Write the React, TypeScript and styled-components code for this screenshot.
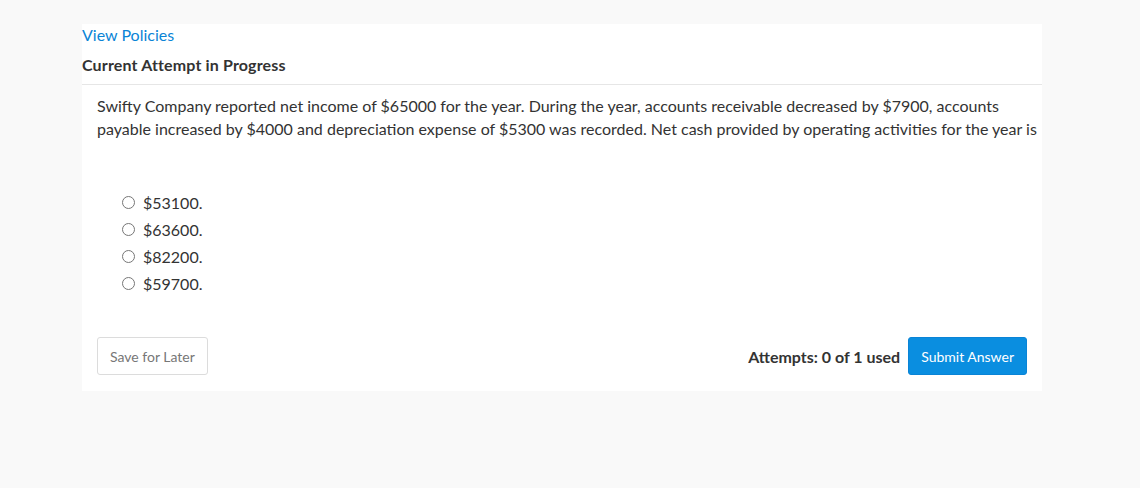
import React from 'react';
import styled, { createGlobalStyle } from 'styled-components';

const GlobalStyle = createGlobalStyle`
    html, body {
        margin: 0;
        padding: 0;
        background: #f9f9f9;
        font-family: Lato, "Open Sans", sans-serif;
        color: #333333;
    }
`;

const Page = styled.div`
    width: 1140px;
    height: 488px;
    padding-top: 24px;
    box-sizing: border-box;
`;

const Card = styled.main`
    width: 960px;
    margin-left: 82px;
    background: #ffffff;
    padding-bottom: 16px;
`;

const Header = styled.header`
    border-bottom: 1px solid #e6e6e6;
    padding-bottom: 8px;
`;

const PolicyLink = styled.a`
    display: block;
    font-size: 16px;
    line-height: 22px;
    color: #0a84d6;
    text-decoration: none;
    cursor: pointer;
`;

const Title = styled.h2`
    margin: 8px 0 0;
    font-size: 16px;
    line-height: 22px;
    font-weight: 700;
    letter-spacing: 0.15px;
    color: #333333;
`;

const Body = styled.section`
    padding: 9px 15px 0;
`;

const Question = styled.p`
    margin: 0 -15px 0 0;
    font-size: 16px;
    line-height: 23px;
    color: #333333;
`;

const Options = styled.ul`
    list-style: none;
    margin: 49px 0 0;
    padding: 0 0 0 25px;
`;

const Option = styled.li`
    display: flex;
    align-items: center;
    height: 27px;
    font-size: 16px;
    & input {
        margin: 0 8px 0 0;
        width: 13px;
        height: 13px;
    }
`;

const Footer = styled.footer`
    display: flex;
    justify-content: space-between;
    align-items: center;
    margin-top: 40px;
`;

const SaveButton = styled.button`
    height: 38px;
    padding: 0 12px;
    background: #ffffff;
    border: 1px solid #dcdcdc;
    border-radius: 3px;
    font-family: inherit;
    font-size: 14px;
    color: #777777;
`;

const Right = styled.div`
    display: flex;
    align-items: center;
    gap: 8px;
`;

const Attempts = styled.span`
    font-size: 16px;
    font-weight: 700;
    color: #333333;
`;

const SubmitButton = styled.button`
    height: 38px;
    padding: 0 12px;
    background: #0a8ee0;
    border: 1px solid #0a84d6;
    border-radius: 3px;
    font-family: inherit;
    font-size: 14px;
    color: #ffffff;
`;

const answers = ['$53100.', '$63600.', '$82200.', '$59700.'];

export default function App() {
    return (
        <Page>
            <GlobalStyle/>
            <Card>
                <Header>
                    <PolicyLink>View Policies</PolicyLink>
                    <Title>Current Attempt in Progress</Title>
                </Header>
                <Body>
                    <Question>
                        Swifty Company reported net income of $65000 for the year. During the year, accounts receivable decreased by $7900, accounts payable increased by $4000 and depreciation expense of $5300 was recorded. Net cash provided by operating activities for the year is
                    </Question>
                    <Options>
                        {answers.map(a => (
                            <Option key={a}>
                                <input type="radio" name="answer"/>
                                <span>{a}</span>
                            </Option>
                        ))}
                    </Options>
                    <Footer>
                        <SaveButton>Save for Later</SaveButton>
                        <Right>
                            <Attempts>Attempts: 0 of 1 used</Attempts>
                            <SubmitButton>Submit Answer</SubmitButton>
                        </Right>
                    </Footer>
                </Body>
            </Card>
        </Page>
    );
}
